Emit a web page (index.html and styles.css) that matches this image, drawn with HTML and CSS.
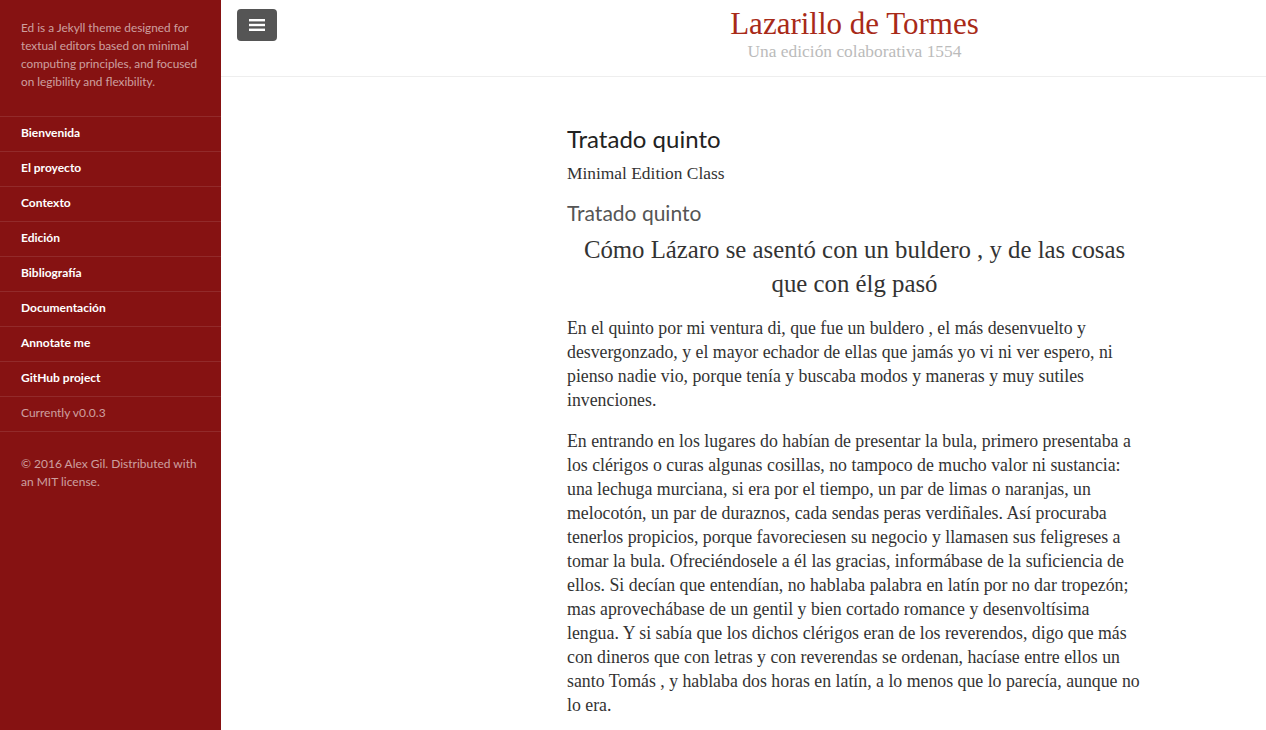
FILE: index.html
```html
<!DOCTYPE html>
<html lang="es">
<head>
<meta charset="utf-8">
<title>Lazarillo de Tormes</title>
<link rel="stylesheet" href="styles.css">
</head>
<body>
<div class="layout">
  <aside class="sidebar">
    <p class="lead">Ed is a Jekyll theme designed for textual editors based on minimal computing principles, and focused on legibility and flexibility.</p>
    <nav class="nav">
      <a class="nav-item" href="#">Bienvenida</a>
      <a class="nav-item" href="#">El proyecto</a>
      <a class="nav-item" href="#">Contexto</a>
      <a class="nav-item" href="#">Edición</a>
      <a class="nav-item" href="#">Bibliografía</a>
      <a class="nav-item" href="#">Documentación</a>
      <a class="nav-item" href="#">Annotate me</a>
      <a class="nav-item" href="#">GitHub project</a>
      <span class="nav-item muted">Currently v0.0.3</span>
    </nav>
    <p class="copy">© 2016 Alex Gil. Distributed with an MIT license.</p>
  </aside>
  <main class="main">
    <header class="masthead">
      <button class="toggle" aria-label="Menu">
        <svg width="16" height="12" viewBox="0 0 16 12"><rect x="0" y="0" width="16" height="2.4" fill="#fff"/><rect x="0" y="4.8" width="16" height="2.4" fill="#fff"/><rect x="0" y="9.6" width="16" height="2.4" fill="#fff"/></svg>
      </button>
      <div class="container masthead-inner">
        <h1 class="site-title">Lazarillo de Tormes</h1>
        <div class="site-sub">Una edición colaborativa 1554</div>
      </div>
    </header>
    <article class="container content">
      <h2 class="page-title">Tratado quinto</h2>
      <p class="klass">Minimal Edition Class</p>
      <h3 class="sub">Tratado quinto</h3>
      <h4 class="chapter">Cómo Lázaro se asentó con un buldero , y de las cosas que con élg pasó</h4>
      <p class="para">En el quinto por mi ventura di, que fue un buldero , el más desenvuelto y desvergonzado, y el mayor echador de ellas que jamás yo vi ni ver espero, ni pienso nadie vio, porque tenía y buscaba modos y maneras y muy sutiles invenciones.</p>
      <p class="para">En entrando en los lugares do habían de presentar la bula, primero presentaba a los clérigos o curas algunas cosillas, no tampoco de mucho valor ni sustancia: una lechuga murciana, si era por el tiempo, un par de limas o naranjas, un melocotón, un par de duraznos, cada sendas peras verdiñales. Así procuraba tenerlos propicios, porque favoreciesen su negocio y llamasen sus feligreses a tomar la bula. Ofreciéndosele a él las gracias, informábase de la suficiencia de ellos. Si decían que entendían, no hablaba palabra en latín por no dar tropezón; mas aprovechábase de un gentil y bien cortado romance y desenvoltísima lengua. Y si sabía que los dichos clérigos eran de los reverendos, digo que más con dineros que con letras y con reverendas se ordenan, hacíase entre ellos un santo Tomás , y hablaba dos horas en latín, a lo menos que lo parecía, aunque no lo era.</p>
    </article>
  </main>
</div>
</body>
</html>
```

FILE: styles.css
```css
* { box-sizing: border-box; }
html, body { margin: 0; padding: 0; height: 100%; }
body {
  font-family: "Liberation Serif", serif;
  color: #333;
  background: #fff;
  overflow: hidden;
}
.layout {
  display: flex;
  min-height: 730px;
}
.sidebar {
  flex: 0 0 221px;
  width: 221px;
  min-height: 730px;
  background: #861212;
  font-family: Lato, "Liberation Sans", sans-serif;
  font-size: 12px;
  color: rgba(255,255,255,.6);
}
.lead {
  margin: 0;
  padding: 19px 10px 25px 21px;
  line-height: 18px;
  font-size: 11.8px;
}
.nav {
  display: flex;
  flex-direction: column;
  border-top: 1px solid rgba(255,255,255,.1);
}
.nav-item {
  display: block;
  height: 35px;
  line-height: 32px;
  padding: 0 21px;
  color: #fff;
  font-weight: 700;
  text-decoration: none;
  border-bottom: 1px solid rgba(255,255,255,.1);
}
.nav-item.muted {
  color: rgba(255,255,255,.6);
  font-weight: 400;
}
.copy {
  margin: 0;
  padding: 23px 21px;
  line-height: 18px;
}
.main {
  flex: 1;
  position: relative;
}
.container {
  width: 575px;
  margin-left: 346px;
}
.masthead {
  height: 77px;
  border-bottom: 1px solid #eee;
}
.toggle {
  position: absolute;
  left: 16px;
  top: 9px;
  width: 40px;
  height: 32px;
  border: 0;
  border-radius: 4px;
  background: #555;
  display: flex;
  align-items: center;
  justify-content: center;
  padding: 0;
}
.masthead-inner {
  text-align: center;
  padding-top: 7px;
}
.site-title {
  margin: 0;
  font-weight: 400;
  font-size: 31px;
  line-height: 33px;
  color: #a82a18;
}
.site-sub {
  font-size: 17.4px;
  line-height: 22px;
  color: #bbb;
}
.content {
  padding-top: 48px;
}
.page-title {
  margin: 0 0 8px;
  font-family: Lato, "Liberation Sans", sans-serif;
  font-weight: 400;
  font-size: 24px;
  line-height: 28px;
  color: #222;
}
.klass {
  margin: 0 0 14px;
  font-size: 17.4px;
  line-height: 24px;
}
.sub {
  margin: 0 0 6px;
  font-family: Lato, "Liberation Sans", sans-serif;
  font-weight: 400;
  font-size: 21px;
  line-height: 28px;
  color: #555;
}
.chapter {
  margin: 0 0 15px;
  font-weight: 400;
  font-size: 24.8px;
  line-height: 34px;
  text-align: center;
  color: #333;
}
.para {
  margin: 0 0 17px;
  font-size: 17.8px;
  line-height: 24px;
}
```
